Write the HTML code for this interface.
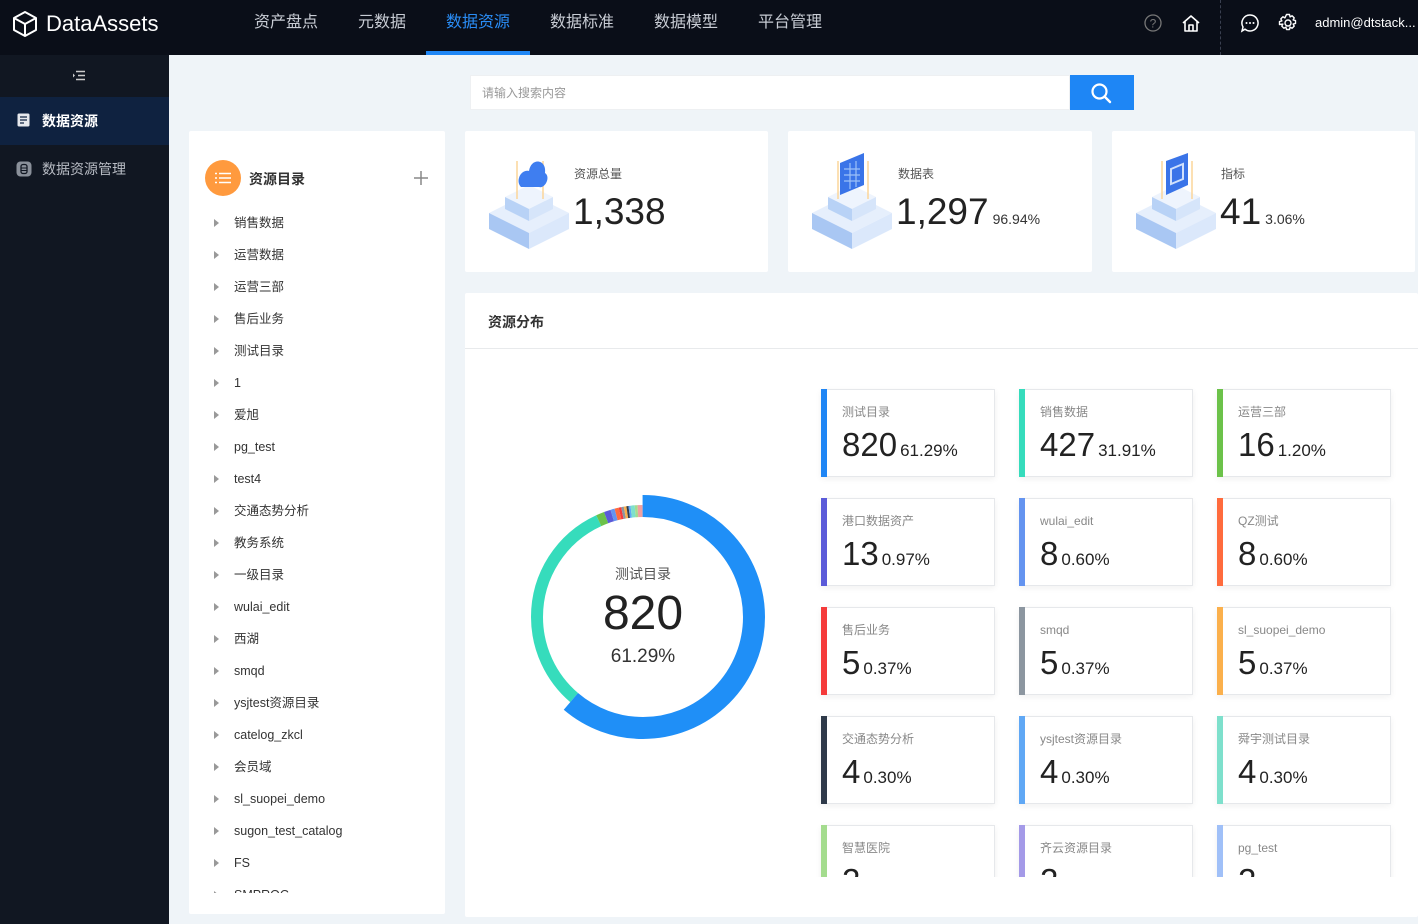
<!DOCTYPE html>
<html><head><meta charset="utf-8"><style>
*{box-sizing:border-box;margin:0;padding:0}
body{width:1418px;height:924px;overflow:hidden;background:#eff4f8;font-family:"Liberation Sans","Noto Sans CJK SC",sans-serif;position:relative;color:#333}
.abs{position:absolute}
.hdr{left:0;top:0;width:1418px;height:55px;background:#0a0e18}
.nav{top:0;height:55px;line-height:46px;font-size:16px;color:#c8ccd4}
.side{left:0;top:55px;width:169px;height:869px;background:#111722}
.card{background:#fff;border-radius:2px}
.tree div{position:absolute;left:216px;font-size:12.5px;color:#333;height:16px;line-height:16px}
.tree div:before{content:"";position:absolute;left:-2px;top:4px;border-left:5px solid #999;border-top:4px solid transparent;border-bottom:4px solid transparent}
.tree span{position:absolute;left:18px;top:0;white-space:nowrap;line-height:16px;height:16px}
.g{position:absolute;width:174px;height:88px;background:#fff;border:1px solid #e6e8eb;box-shadow:0 2px 6px rgba(0,0,0,.06)}
.g b{position:absolute;left:-1px;top:-1px;bottom:-1px;width:6px}
.g .t{position:absolute;left:20px;top:14px;font-size:12px;color:#888;line-height:16px}
.g .n{position:absolute;left:20px;top:36px;font-size:33px;color:#222;white-space:nowrap;line-height:38px}
.g .n small{font-size:17px;margin-left:3px}
.st .l{position:absolute;font-size:12px;color:#555}
.st .v{position:absolute;font-size:37px;color:#222;white-space:nowrap}
.st .v small{font-size:14px;margin-left:4px;color:#333}
</style></head><body>
<div class="abs hdr"></div>
<svg class="abs" style="left:12px;top:10px" width="26" height="28" viewBox="0 0 26 28"><path d="M13 2 L24 8 V20 L13 26 L2 20 V8 Z M2 8 L13 14 L24 8 M13 14 V26" fill="none" stroke="#fff" stroke-width="2" stroke-linejoin="round"/></svg>
<div class="abs" style="left:46px;top:10px;font-size:22px;color:#fff;line-height:28px">DataAssets</div>
<div class="abs nav" style="left:254px">资产盘点</div>
<div class="abs nav" style="left:358px">元数据</div>
<div class="abs nav" style="left:446px;color:#2a8df6">数据资源</div>
<div class="abs" style="left:426px;top:51px;width:104px;height:4px;background:#1f86f5"></div>
<div class="abs nav" style="left:550px">数据标准</div>
<div class="abs nav" style="left:654px">数据模型</div>
<div class="abs nav" style="left:758px">平台管理</div>
<svg class="abs" style="left:1144px;top:14px" width="18" height="18"><circle cx="9" cy="9" r="8" fill="none" stroke="#777" stroke-width="1.3"/><text x="9" y="13.5" font-size="12" fill="#777" text-anchor="middle" font-family="Liberation Sans">?</text></svg>
<svg class="abs" style="left:1181px;top:13px" width="20" height="20"><path d="M2 10 L10 3 L18 10 M4 8.5 V18 H16 V8.5 M8 18 V12 H12 V18" fill="none" stroke="#fff" stroke-width="1.6" stroke-linejoin="round"/></svg>
<div class="abs" style="left:1220px;top:0;height:55px;border-left:1px dashed #3a4050"></div>
<svg class="abs" style="left:1240px;top:13px" width="20" height="20"><path d="M10 2a8 8 0 1 1-5 14.2L2 18l1-4A8 8 0 0 1 10 2z" fill="none" stroke="#fff" stroke-width="1.5"/><circle cx="6.5" cy="10" r="1" fill="#fff"/><circle cx="10" cy="10" r="1" fill="#fff"/><circle cx="13.5" cy="10" r="1" fill="#fff"/></svg>
<svg class="abs" style="left:1278px;top:13px" width="20" height="20"><path d="M8.5 1.5h3l.6 2.4 2-1.1 2.1 2.1-1.1 2 2.4.6v3l-2.4.6 1.1 2-2.1 2.1-2-1.1-.6 2.4h-3l-.6-2.4-2 1.1-2.1-2.1 1.1-2L1.5 11.5v-3l2.4-.6-1.1-2 2.1-2.1 2 1.1z" fill="none" stroke="#fff" stroke-width="1.4" stroke-linejoin="round"/><circle cx="10" cy="10" r="3" fill="none" stroke="#fff" stroke-width="1.4"/></svg>
<div class="abs" style="left:1315px;top:15px;font-size:13px;color:#fff">admin@dtstack...</div>

<div class="abs side"></div>
<svg class="abs" style="left:72px;top:70px" width="14" height="11"><path d="M4 1.5H13M6 5.5H13M4 9.5H13" stroke="#ccc" stroke-width="1.5"/><path d="M1 3.5 L3 5.5 L1 7.5" fill="#ccc"/></svg>
<div class="abs" style="left:0;top:97px;width:169px;height:48px;background:#0f2240"></div>
<svg class="abs" style="left:17px;top:113px" width="13" height="14"><rect x="0.5" y="0.5" width="12" height="13" rx="1.5" fill="#e6e8ec"/><path d="M3 4H10M3 7H10M3 10H7" stroke="#0f2240" stroke-width="1.3"/></svg>
<div class="abs" style="left:42px;top:111px;font-size:14px;color:#fff;font-weight:bold">数据资源</div>
<svg class="abs" style="left:16px;top:161px" width="16" height="16"><rect x="0.5" y="0.5" width="15" height="15" rx="4" fill="#8a909a"/><rect x="5" y="3.5" width="6" height="9" rx="2" fill="none" stroke="#111722" stroke-width="1.3"/><path d="M5 7h6M5 9.5h6" stroke="#111722" stroke-width="1"/></svg>
<div class="abs" style="left:42px;top:159px;font-size:14px;color:#b8bcc4">数据资源管理</div>

<div class="abs" style="left:470px;top:75px;width:600px;height:35px;background:#fff;border:1px solid #eef0f2"></div>
<div class="abs" style="left:482px;top:84px;font-size:12px;color:#999">请输入搜索内容</div>
<div class="abs" style="left:1070px;top:75px;width:64px;height:35px;background:#1e86f5"></div>
<svg class="abs" style="left:1090px;top:82px" width="24" height="22"><circle cx="9.5" cy="9.5" r="7" fill="none" stroke="#fff" stroke-width="2.2"/><path d="M14.5 14.5 L20 20" stroke="#fff" stroke-width="2.4" stroke-linecap="round"/></svg>

<div class="abs card" style="left:189px;top:131px;width:256px;height:783px"></div>
<div class="abs" style="left:205px;top:160px;width:36px;height:36px;border-radius:50%;background:#ff9a3e"></div>
<svg class="abs" style="left:215px;top:172px" width="16" height="12"><path d="M0 1.5h2M4 1.5h12M0 6h2M4 6h12M0 10.5h2M4 10.5h12" stroke="#fff" stroke-width="1.5"/></svg>
<div class="abs" style="left:249px;top:169px;font-size:14px;font-weight:bold;color:#333">资源目录</div>
<svg class="abs" style="left:413px;top:170px" width="16" height="16"><path d="M8 1v14M1 8h14" stroke="#888" stroke-width="1.5"/></svg>
<div class="abs" style="left:189px;top:205px;width:256px;height:688px;overflow:hidden">
<div class="tree" style="position:absolute;left:-189px;top:-205px">
<div style="top:215px"><span>销售数据</span></div>
<div style="top:247px"><span>运营数据</span></div>
<div style="top:279px"><span>运营三部</span></div>
<div style="top:311px"><span>售后业务</span></div>
<div style="top:343px"><span>测试目录</span></div>
<div style="top:375px"><span>1</span></div>
<div style="top:407px"><span>爱旭</span></div>
<div style="top:439px"><span>pg_test</span></div>
<div style="top:471px"><span>test4</span></div>
<div style="top:503px"><span>交通态势分析</span></div>
<div style="top:535px"><span>教务系统</span></div>
<div style="top:567px"><span>一级目录</span></div>
<div style="top:599px"><span>wulai_edit</span></div>
<div style="top:631px"><span>西湖</span></div>
<div style="top:663px"><span>smqd</span></div>
<div style="top:695px"><span>ysjtest资源目录</span></div>
<div style="top:727px"><span>catelog_zkcl</span></div>
<div style="top:759px"><span>会员域</span></div>
<div style="top:791px"><span>sl_suopei_demo</span></div>
<div style="top:823px"><span>sugon_test_catalog</span></div>
<div style="top:855px"><span>FS</span></div>
<div style="top:887px"><span>SMPROC</span></div>
</div></div>

<!-- stat cards -->
<div class="abs card st" style="left:465px;top:131px;width:303px;height:141px">
<svg class="abs" style="left:22px;top:20px" width="84" height="100" viewBox="0 0 84 100"><path d="M2 62 L42 42 L82 62 L42 82Z" fill="#e6effc"/><path d="M2 62 L42 82 V98 L2 78Z" fill="#a9c7f3"/><path d="M82 62 L42 82 V98 L82 78Z" fill="#dbe8fb"/><path d="M18 46 L42 34 L66 46 L42 58Z" fill="#eef4fd"/><path d="M18 46 L42 58 V70 L18 58Z" fill="#b8d2f6"/><path d="M66 46 L42 58 V70 L66 58Z" fill="#d6e5fa"/><path d="M30 10 L30 48 M56 10 L56 48" stroke="#fcd59a" stroke-width="1.5"/><path d="M34 36 C28 30 34 18 42 20 C44 6 60 8 58 22 C64 26 58 38 52 36Z" fill="#3f7ef0"/></svg>
<div class="l" style="left:109px;top:34px">资源总量</div><div class="v" style="left:108px;top:60px">1,338</div></div>
<div class="abs card st" style="left:788px;top:131px;width:304px;height:141px">
<svg class="abs" style="left:22px;top:20px" width="84" height="100" viewBox="0 0 84 100"><path d="M2 62 L42 42 L82 62 L42 82Z" fill="#e6effc"/><path d="M2 62 L42 82 V98 L2 78Z" fill="#a9c7f3"/><path d="M82 62 L42 82 V98 L82 78Z" fill="#dbe8fb"/><path d="M18 46 L42 34 L66 46 L42 58Z" fill="#eef4fd"/><path d="M18 46 L42 58 V70 L18 58Z" fill="#b8d2f6"/><path d="M66 46 L42 58 V70 L66 58Z" fill="#d6e5fa"/><path d="M28 10 L28 48 M58 10 L58 48" stroke="#fcd59a" stroke-width="1.5"/><path d="M30 12 L54 2 V34 L30 44Z" fill="#3a74e8"/><path d="M34 18h16M34 24h16M34 30h16M40 12v26M46 10v26" stroke="#9cc0f8" stroke-width="1.2"/></svg>
<div class="l" style="left:110px;top:34px">数据表</div><div class="v" style="left:108px;top:60px">1,297<small>96.94%</small></div></div>
<div class="abs card st" style="left:1112px;top:131px;width:303px;height:141px">
<svg class="abs" style="left:22px;top:20px" width="84" height="100" viewBox="0 0 84 100"><path d="M2 62 L42 42 L82 62 L42 82Z" fill="#e6effc"/><path d="M2 62 L42 82 V98 L2 78Z" fill="#a9c7f3"/><path d="M82 62 L42 82 V98 L82 78Z" fill="#dbe8fb"/><path d="M18 46 L42 34 L66 46 L42 58Z" fill="#eef4fd"/><path d="M18 46 L42 58 V70 L18 58Z" fill="#b8d2f6"/><path d="M66 46 L42 58 V70 L66 58Z" fill="#d6e5fa"/><path d="M28 10 L28 48 M58 10 L58 48" stroke="#fcd59a" stroke-width="1.5"/><path d="M32 10 L54 2 V34 L32 44Z" fill="#3a74e8"/><path d="M37 18 L49 13 V28 L37 33Z" fill="none" stroke="#cfe0fc" stroke-width="2"/></svg>
<div class="l" style="left:109px;top:34px">指标</div><div class="v" style="left:108px;top:60px">41<small>3.06%</small></div></div>

<!-- distribution -->
<div class="abs card" style="left:465px;top:293px;width:953px;height:624px"></div>
<div class="abs" style="left:488px;top:312px;font-size:14px;font-weight:bold;color:#333">资源分布</div>
<div class="abs" style="left:465px;top:348px;width:953px;height:1px;background:#e8eaec"></div>
<svg class="abs" style="left:521px;top:495px" width="244" height="244" viewBox="0 0 244 244">
<g transform="rotate(-90 122 122)">
<circle cx="122" cy="122" r="106" fill="none" stroke="#36dcbc" stroke-width="12" pathLength="100" stroke-dasharray="31.91 68.09" stroke-dashoffset="-61.29"/>
<circle cx="122" cy="122" r="106" fill="none" stroke="#6cc24a" stroke-width="12" pathLength="100" stroke-dasharray="1.2 98.8" stroke-dashoffset="-93.2"/>
<circle cx="122" cy="122" r="106" fill="none" stroke="#5b5bd9" stroke-width="12" pathLength="100" stroke-dasharray="0.97 99.03" stroke-dashoffset="-94.4"/>
<circle cx="122" cy="122" r="106" fill="none" stroke="#6494f0" stroke-width="12" pathLength="100" stroke-dasharray="0.6 99.4" stroke-dashoffset="-95.37"/>
<circle cx="122" cy="122" r="106" fill="none" stroke="#ff6b3d" stroke-width="12" pathLength="100" stroke-dasharray="0.6 99.4" stroke-dashoffset="-95.97"/>
<circle cx="122" cy="122" r="106" fill="none" stroke="#f53b3b" stroke-width="12" pathLength="100" stroke-dasharray="0.37 99.63" stroke-dashoffset="-96.57"/>
<circle cx="122" cy="122" r="106" fill="none" stroke="#8c96a0" stroke-width="12" pathLength="100" stroke-dasharray="0.37 99.63" stroke-dashoffset="-96.94"/>
<circle cx="122" cy="122" r="106" fill="none" stroke="#fbb04c" stroke-width="12" pathLength="100" stroke-dasharray="0.37 99.63" stroke-dashoffset="-97.31"/>
<circle cx="122" cy="122" r="106" fill="none" stroke="#2f3a4a" stroke-width="12" pathLength="100" stroke-dasharray="0.3 99.7" stroke-dashoffset="-97.68"/>
<circle cx="122" cy="122" r="106" fill="none" stroke="#60a8f5" stroke-width="12" pathLength="100" stroke-dasharray="0.3 99.7" stroke-dashoffset="-97.98"/>
<circle cx="122" cy="122" r="106" fill="none" stroke="#7ee0cc" stroke-width="12" pathLength="100" stroke-dasharray="0.6 99.4" stroke-dashoffset="-98.28"/>
<circle cx="122" cy="122" r="106" fill="none" stroke="#a4dc8e" stroke-width="12" pathLength="100" stroke-dasharray="0.4 99.6" stroke-dashoffset="-98.88"/>
<circle cx="122" cy="122" r="106" fill="none" stroke="#f0a0a0" stroke-width="12" pathLength="100" stroke-dasharray="0.7 99.3" stroke-dashoffset="-99.28"/>
<circle cx="122" cy="122" r="111" fill="none" stroke="#1f8ff7" stroke-width="22" pathLength="100" stroke-dasharray="61.29 38.71"/>
</g></svg>
<div class="abs" style="left:543px;top:564px;width:200px;text-align:center;font-size:14px;color:#555">测试目录</div>
<div class="abs" style="left:543px;top:586px;width:200px;text-align:center;font-size:48px;color:#222">820</div>
<div class="abs" style="left:543px;top:646px;width:200px;text-align:center;font-size:19px;color:#333">61.29%</div>

<div class="abs" style="left:815px;top:380px;width:600px;height:497px;overflow:hidden">
<div style="position:absolute;left:-815px;top:-380px">
<div class="g" style="left:821px;top:389px"><b style="background:#1f86f5"></b><div class="t">测试目录</div><div class="n">820<small>61.29%</small></div></div>
<div class="g" style="left:1019px;top:389px"><b style="background:#36dcbc"></b><div class="t">销售数据</div><div class="n">427<small>31.91%</small></div></div>
<div class="g" style="left:1217px;top:389px"><b style="background:#6cc24a"></b><div class="t">运营三部</div><div class="n">16<small>1.20%</small></div></div>
<div class="g" style="left:821px;top:498px"><b style="background:#5b5bd9"></b><div class="t">港口数据资产</div><div class="n">13<small>0.97%</small></div></div>
<div class="g" style="left:1019px;top:498px"><b style="background:#6494f0"></b><div class="t">wulai_edit</div><div class="n">8<small>0.60%</small></div></div>
<div class="g" style="left:1217px;top:498px"><b style="background:#ff6b3d"></b><div class="t">QZ测试</div><div class="n">8<small>0.60%</small></div></div>
<div class="g" style="left:821px;top:607px"><b style="background:#f53b3b"></b><div class="t">售后业务</div><div class="n">5<small>0.37%</small></div></div>
<div class="g" style="left:1019px;top:607px"><b style="background:#8c96a0"></b><div class="t">smqd</div><div class="n">5<small>0.37%</small></div></div>
<div class="g" style="left:1217px;top:607px"><b style="background:#fbb04c"></b><div class="t">sl_suopei_demo</div><div class="n">5<small>0.37%</small></div></div>
<div class="g" style="left:821px;top:716px"><b style="background:#2f3a4a"></b><div class="t">交通态势分析</div><div class="n">4<small>0.30%</small></div></div>
<div class="g" style="left:1019px;top:716px"><b style="background:#60a8f5"></b><div class="t">ysjtest资源目录</div><div class="n">4<small>0.30%</small></div></div>
<div class="g" style="left:1217px;top:716px"><b style="background:#7ee0cc"></b><div class="t">舜宇测试目录</div><div class="n">4<small>0.30%</small></div></div>
<div class="g" style="left:821px;top:825px"><b style="background:#a4dc8e"></b><div class="t">智慧医院</div><div class="n">2<small>0.15%</small></div></div>
<div class="g" style="left:1019px;top:825px"><b style="background:#a49ae8"></b><div class="t">齐云资源目录</div><div class="n">2<small>0.15%</small></div></div>
<div class="g" style="left:1217px;top:825px"><b style="background:#a0c0f8"></b><div class="t">pg_test</div><div class="n">2<small>0.15%</small></div></div>
</div></div>
</body></html>
